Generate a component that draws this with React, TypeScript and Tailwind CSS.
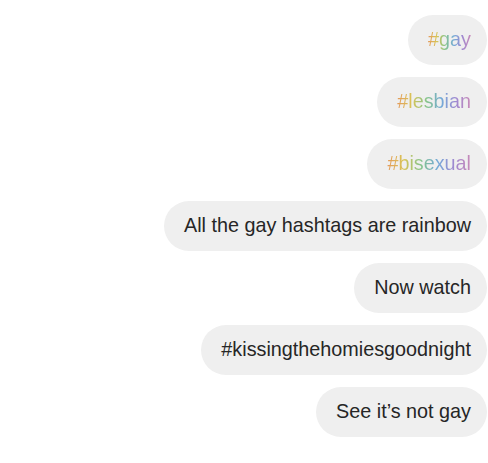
import React from "react";

function Bubble({ children, rainbowText }: { children: React.ReactNode; rainbowText?: boolean }) {
  return (
    <div className="h-[50px] rounded-full bg-[#efefef] pl-[20px] pr-[16px] flex items-center">
      {rainbowText ? (
        <span className="bg-[linear-gradient(90deg,#e49a5a_0%,#d9c456_20%,#86c48a_40%,#74aad8_60%,#a088d0_80%,#c88ab8_100%)] bg-clip-text text-transparent">
          {children}
        </span>
      ) : (
        <span className="text-[#262626]">{children}</span>
      )}
    </div>
  );
}

export default function App() {
  return (
    <div
      className="w-[488px] h-[463px] bg-white flex flex-col items-end gap-[12px] pt-[15px] pr-[1px] text-[19.8px] leading-none"
      style={{ fontFamily: '"Liberation Sans", Arial, sans-serif' }}
    >
      <Bubble rainbowText>#gay</Bubble>
      <Bubble rainbowText>#lesbian</Bubble>
      <Bubble rainbowText>#bisexual</Bubble>
      <Bubble>All the gay hashtags are rainbow</Bubble>
      <Bubble>Now watch</Bubble>
      <Bubble>#kissingthehomiesgoodnight</Bubble>
      <Bubble>See it’s not gay</Bubble>
    </div>
  );
}
